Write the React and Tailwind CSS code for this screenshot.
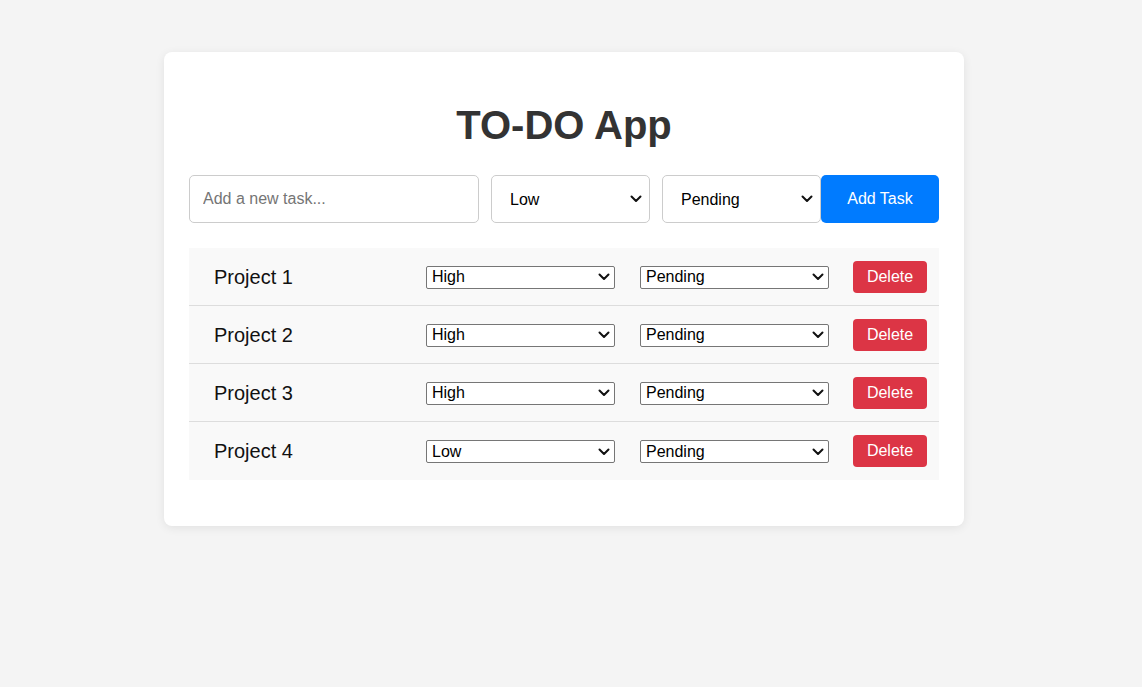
import React from "react";

const Chevron = ({ className = "" }) => (
  <svg width="12" height="8" viewBox="0 0 12 8" className={className} aria-hidden="true">
    <path d="M1.5 1.5 L6 6 L10.5 1.5" fill="none" stroke="#111" strokeWidth="2" strokeLinecap="round" strokeLinejoin="round" />
  </svg>
);

const TopSelect = ({ value, options }) => (
  <div className="relative w-[159px] h-[48px]">
    <select
      defaultValue={value}
      className="appearance-none w-full h-full rounded-[5px] border border-[#ccc] bg-white pl-[18px] pr-8 pt-[1px] text-[16px] text-black outline-none"
    >
      {options.map((o) => (
        <option key={o}>{o}</option>
      ))}
    </select>
    <Chevron className="pointer-events-none absolute right-[8px] top-[20px]" />
  </div>
);

const RowSelect = ({ value, options }) => (
  <div className="relative w-[189px] h-[23px]">
    <select
      defaultValue={value}
      className="appearance-none w-full h-full rounded-[2px] border border-[#767676] bg-white pl-[5px] pr-6 text-[16px] leading-[20px] text-black outline-none"
    >
      {options.map((o) => (
        <option key={o}>{o}</option>
      ))}
    </select>
    <Chevron className="pointer-events-none absolute right-[5px] top-[8px]" />
  </div>
);

const tasks = [
  { name: "Project 1", priority: "High", status: "Pending" },
  { name: "Project 2", priority: "High", status: "Pending" },
  { name: "Project 3", priority: "High", status: "Pending" },
  { name: "Project 4", priority: "Low", status: "Pending" },
];

export default function App() {
  return (
    <div
      className="min-h-[687px] w-full bg-[#f4f4f4] pt-[52px] pl-[164px]"
      style={{ fontFamily: '"Liberation Sans", Arial, sans-serif' }}
    >
      <div className="w-[800px] rounded-[8px] bg-white px-[25px] pt-[25px] pb-[46px] shadow-[0_2px_10px_rgba(0,0,0,0.08)]">
        <h1 className="mt-[25px] mb-[27px] text-center text-[40px] leading-[46px] font-bold text-[#333]">
          TO-DO App
        </h1>
        <div className="flex items-center">
          <input
            placeholder="Add a new task..."
            className="w-[290px] h-[48px] rounded-[5px] border border-[#ccc] bg-white px-[13px] text-[16px] text-black placeholder:text-[#757575] outline-none"
          />
          <div className="ml-[12px]">
            <TopSelect value="Low" options={["Low", "Medium", "High"]} />
          </div>
          <div className="ml-[12px]">
            <TopSelect value="Pending" options={["Pending", "Completed"]} />
          </div>
          <button className="w-[118px] h-[48px] rounded-[5px] bg-[#007bff] text-[16px] text-white">
            Add Task
          </button>
        </div>
        <ul className="mt-[25px]">
          {tasks.map((t, i) => (
            <li
              key={t.name}
              className={`flex h-[58px] items-center bg-[#f9f9f9] pl-[25px] pr-[12px] ${
                i < tasks.length - 1 ? "border-b border-[#ddd]" : ""
              }`}
            >
              <span className="w-[212px] text-[20px] text-[#111]">{t.name}</span>
              <RowSelect value={t.priority} options={["Low", "Medium", "High"]} />
              <div className="ml-[25px]">
                <RowSelect value={t.status} options={["Pending", "Completed"]} />
              </div>
              <button className="ml-auto w-[74px] h-[32px] rounded-[4px] bg-[#dc3545] text-[16px] text-white">
                Delete
              </button>
            </li>
          ))}
        </ul>
      </div>
    </div>
  );
}
